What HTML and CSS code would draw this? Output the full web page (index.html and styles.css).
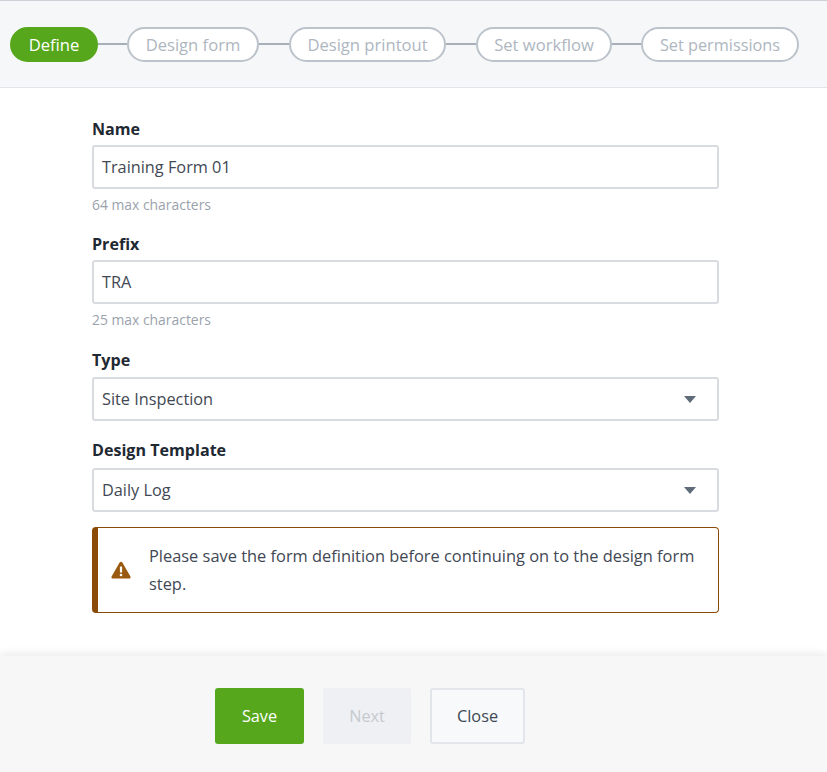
FILE: index.html
```html
<!DOCTYPE html>
<html lang="en">
<head>
<meta charset="utf-8">
<title>Define form</title>
<link rel="stylesheet" href="styles.css">
</head>
<body>
<header class="stepper">
  <div class="step step-active"><span class="step-text">Define</span></div>
  <div class="link link-a"></div>
  <div class="step step-form"><span class="step-text">Design form</span></div>
  <div class="link link-b"></div>
  <div class="step step-print"><span class="step-text">Design printout</span></div>
  <div class="link link-b"></div>
  <div class="step step-flow"><span class="step-text">Set workflow</span></div>
  <div class="link link-a"></div>
  <div class="step step-perm"><span class="step-text">Set permissions</span></div>
</header>
<main class="form">
  <div class="field field-name">
    <label class="label">Name</label>
    <div class="control">Training Form 01</div>
    <div class="hint">64 max characters</div>
  </div>
  <div class="field field-prefix">
    <label class="label">Prefix</label>
    <div class="control">TRA</div>
    <div class="hint">25 max characters</div>
  </div>
  <div class="field field-type">
    <label class="label">Type</label>
    <div class="control control-select">Site Inspection<span class="caret"></span></div>
  </div>
  <div class="field field-template">
    <label class="label">Design Template</label>
    <div class="control control-select">Daily Log<span class="caret"></span></div>
  </div>
  <div class="alert">
    <svg class="alert-icon" width="20" height="18" viewBox="0 0 20 18" aria-hidden="true">
      <path d="M10 .8c.6 0 1.1.3 1.4.8l8 13.8c.6 1-.2 2.2-1.4 2.2H2c-1.2 0-2-1.200-1.400-2.200l8-13.800c.3-.5.8-.8 1.400-.8z" fill="#9a5a12"/>
      <rect x="8.900" y="5.500" width="2.200" height="6" rx=".6" fill="#fff"/>
      <circle cx="10" cy="14" r="1.300" fill="#fff"/>
    </svg>
    <p class="alert-text">Please save the form definition before continuing on to the design form step.</p>
  </div>
</main>
<footer class="actions">
  <button class="btn btn-save">Save</button>
  <button class="btn btn-next">Next</button>
  <button class="btn btn-close">Close</button>
</footer>
</body>
</html>
```
FILE: styles.css
```css
* { box-sizing: border-box; }
html, body { margin: 0; height: 100%; }
body {
  width: 827px;
  height: 772px;
  overflow: hidden;
  background: #fff;
  font-family: "Open Sans", "Liberation Sans", sans-serif;
  font-size: 16.3px;
  color: #3f4854;
  display: flex;
  flex-direction: column;
}
.stepper {
  height: 88px;
  flex: none;
  background: #f6f7f9;
  border-top: 1px solid #ccd0d6;
  border-bottom: 1px solid #e2e4e8;
  display: flex;
  align-items: center;
  padding: 0 0 0 10px;
}
.step {
  height: 35px;
  border-radius: 18px;
  border: 2px solid #bcc3cb;
  background: #fff;
  color: #aeb6c0;
  font-size: 16.6px;
  display: flex;
  align-items: center;
  justify-content: center;
  flex: none;
}
.step-text { padding-top: 1px; }
.step-active { width: 88px; background: #56a71c; border-color: #56a71c; color: #fff; }
.step-form { width: 132px; }
.step-print { width: 157px; }
.step-flow { width: 136px; }
.step-perm { width: 158px; font-size: 16.3px; }
.link { height: 2px; background: #a8afb8; flex: none; }
.link-a { width: 29px; }
.link-b { width: 30px; }
.form {
  flex: 1;
  padding: 0 108px 0 92px;
}
.field { display: flex; flex-direction: column; }
.field-name { margin-top: 30px; }
.field-prefix { margin-top: 19px; }
.field-type { margin-top: 20px; }
.field-template { margin-top: 18px; }
.label {
  font-weight: 700;
  font-size: 16.1px;
  line-height: 22px;
  color: #1f2933;
}
.field-name .label, .field-prefix .label { margin-bottom: 5px; }
.field-type .label { margin-bottom: 6px; }
.field-template .label { margin-bottom: 7px; }
.control {
  height: 44px;
  border: 2px solid #d8dbe0;
  border-radius: 3px;
  padding: 0 8px;
  display: flex;
  align-items: center;
  justify-content: space-between;
  background: #fff;
}
.caret {
  width: 0;
  height: 0;
  border-left: 6px solid transparent;
  border-right: 6px solid transparent;
  border-top: 7px solid #5f6b78;
  margin-right: 13px;
}
.hint {
  font-size: 13.9px;
  line-height: 18px;
  color: #9aa2ac;
  margin-top: 7px;
}
.alert {
  margin-top: 15px;
  height: 86px;
  border: 1px solid #8a4b08;
  border-left-width: 6px;
  border-radius: 4px;
  display: flex;
  align-items: center;
  padding: 0 16px 0 13px;
  gap: 18px;
}
.alert-icon { flex: none; }
.alert-text { margin: 0; line-height: 28px; font-size: 16.4px; }
.actions {
  flex: none;
  height: 116px;
  background: #f7f7f8;
  box-shadow: 0 -3px 8px rgba(0, 0, 0, .08);
  display: flex;
  align-items: flex-start;
  padding: 32px 0 0 215px;
  gap: 19px;
}
.btn {
  height: 56px;
  font: inherit;
  border-radius: 3px;
  border: 2px solid transparent;
  padding: 0;
}
.btn-save { width: 89px; background: #56a71c; color: #fff; font-weight: 500; }
.btn-next { width: 88px; background: #eef0f4; color: #c6cacf; }
.btn-close { width: 95px; background: #f8f9fa; border-color: #e2e5ea; color: #3f4854; }
```
